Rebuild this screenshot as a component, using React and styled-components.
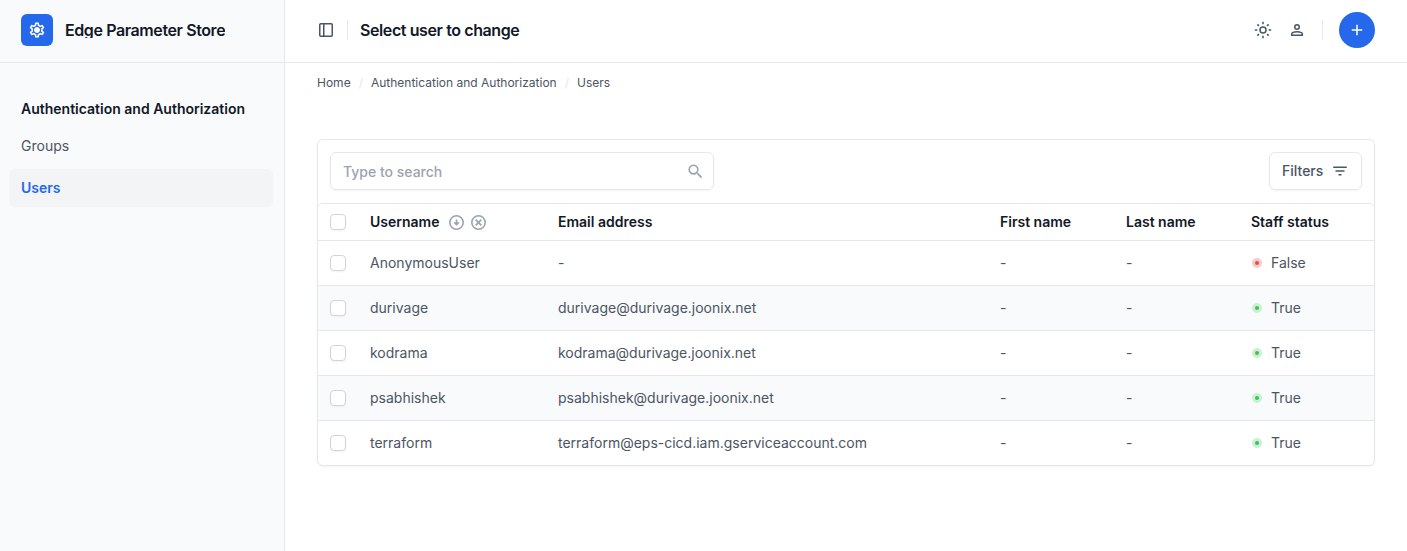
import React from "react";
import styled, { createGlobalStyle, css } from "styled-components";
import { MdOutlineSettings, MdAdd, MdSearch, MdFilterList } from "react-icons/md";

const GlobalStyle = createGlobalStyle`
  *, *::before, *::after { box-sizing: border-box; }
  body {
    margin: 0;
    background: #fff;
    color: #4b5563;
    font-family: Inter, "Liberation Sans", sans-serif;
    font-size: 14px;
    line-height: 20px;
    overflow: hidden;
  }
  svg { display: block; flex-shrink: 0; }
`;

const Page = styled.div`
  display: flex;
  height: 551px;
`;

const Sidebar = styled.aside`
  width: 285px;
  flex-shrink: 0;
  background: #f9fafb;
  border-right: 1px solid #e5e7eb;
`;

const Brand = styled.div`
  display: flex;
  align-items: center;
  gap: 12px;
  height: 63px;
  padding: 0 21px 2px;
  border-bottom: 1px solid #e5e7eb;
`;

const Logo = styled.div`
  display: grid;
  place-items: center;
  width: 32px;
  height: 32px;
  border-radius: 6px;
  background: #2568eb;
  color: #fff;
`;

const BrandName = styled.span`
  color: #111827;
  font-size: 16px;
  font-weight: 600;
  line-height: 16px;
  letter-spacing: -0.4px;
  overflow: hidden;
  white-space: nowrap;
`;

const Nav = styled.nav`
  padding: 36px 11px 0 9px;
`;

const NavTitle = styled.h2`
  margin: 0 0 8px;
  padding: 0 12px;
  color: #111827;
  font-size: 14px;
  font-weight: 600;
  line-height: 20px;
`;

const NavItem = styled.a`
  display: flex;
  align-items: center;
  height: 38px;
  margin-bottom: 4px;
  padding: 0 12px;
  border-radius: 6px;
  ${(p) => p.$active && css`
    background: #f3f4f6;
    color: #2568eb;
    font-weight: 600;
  `}
`;

const Main = styled.main`
  flex: 1;
  min-width: 0;
`;

const Header = styled.header`
  display: flex;
  align-items: center;
  height: 63px;
  padding: 0 32px 2px;
  border-bottom: 1px solid #e5e7eb;
`;

const Divider = styled.span`
  width: 1px;
  height: 20px;
  margin: ${(p) => p.$margin};
  background: #e5e7eb;
`;

const PageTitle = styled.h1`
  margin: 0;
  color: #111827;
  font-size: 16px;
  font-weight: 600;
  line-height: 24px;
  letter-spacing: -0.4px;
`;

const Actions = styled.div`
  display: flex;
  align-items: center;
  margin-left: auto;
`;

const IconGroup = styled.div`
  display: flex;
  gap: 16px;
`;

const AddButton = styled.button`
  display: grid;
  place-items: center;
  width: 36px;
  height: 36px;
  padding: 0;
  border: 0;
  border-radius: 50%;
  background: #2568eb;
  color: #fff;
`;

const Breadcrumbs = styled.div`
  display: flex;
  gap: 8px;
  padding: 12px 32px 0;
  font-size: 12px;
  line-height: 16px;
`;

const Slash = styled.span`
  color: #e5e7eb;
`;

const Card = styled.section`
  margin: 48px 32px 0;
  border: 1px solid #e5e7eb;
  border-radius: 6px;
  box-shadow: 0 1px 2px rgba(0, 0, 0, 0.05);
`;

const Toolbar = styled.div`
  display: flex;
  justify-content: space-between;
  padding: 12px 12px 13px;
`;

const Field = styled.div`
  display: flex;
  align-items: center;
  justify-content: space-between;
  width: ${(p) => p.$width}px;
  height: 38px;
  padding: 0 ${(p) => p.$right}px 0 12px;
  border: 1px solid #e5e7eb;
  border-radius: 6px;
  box-shadow: 0 1px 2px rgba(0, 0, 0, 0.05);
  color: ${(p) => (p.$muted ? "#9ca3af" : "#4b5563")};
  font-weight: 500;
`;

const Placeholder = styled.span`
  padding-top: 2px;
`;

const Table = styled.div`
  margin: 0 -1px -1px;
  border: 1px solid #e5e7eb;
  border-radius: 6px;
  overflow: hidden;
`;

const Row = styled.div`
  display: grid;
  grid-template-columns: 40px 188px 442px 126px 125px 1fr;
  align-items: center;
  height: 45px;
  border-top: 1px solid #e5e7eb;
  background: ${(p) => (p.$striped ? "#f9fafb" : "#fff")};
`;

const HeadRow = styled(Row)`
  height: 36px;
  border-top: 0;
  color: #111827;
  font-weight: 600;
`;

const Cell = styled.div`
  display: flex;
  align-items: center;
  padding: 0 12px;
  white-space: nowrap;
`;

const Checkbox = styled.span`
  width: 16px;
  height: 16px;
  border: 1px solid #d1d5db;
  border-radius: 4px;
  background: #fff;
  box-shadow: 0 1px 2px rgba(0, 0, 0, 0.05);
`;

const SortIcons = styled.span`
  display: flex;
  gap: 7px;
  margin-left: 10px;
  color: #9ca3af;
`;

const Dot = styled.span`
  display: grid;
  place-items: center;
  width: 10px;
  height: 10px;
  margin: 0 9px 0 1px;
  border-radius: 50%;
  background: ${(p) => (p.$on ? "#c6f3d1" : "#f9caca")};
  &::after {
    content: "";
    width: 4px;
    height: 4px;
    border-radius: 50%;
    background: ${(p) => (p.$on ? "#4fb85f" : "#dc5148")};
  }
`;

const GearIcon = () => (
  <svg width="18" height="18" viewBox="0 0 18 18" fill="currentColor">
    <MdOutlineSettings size={18} />
    <circle cx="9" cy="9" r="2.2" />
  </svg>
);

const PanelIcon = () => (
  <svg width="18" height="18" viewBox="0 0 18 18" fill="none" stroke="#4b5563" strokeWidth="1.5">
    <rect x="2.75" y="2.75" width="12.5" height="12.5" rx="1" />
    <path d="M6.75 3v12" />
  </svg>
);

const SunIcon = () => (
  <svg width="18" height="18" viewBox="0 0 18 18" fill="none" stroke="#4b5563" strokeWidth="1.5">
    <circle cx="9" cy="9" r="3" />
    <path d="M9 .8v2.5M9 14.7v2.5M.8 9h2.5M14.7 9h2.5M3.4 3.4l1.5 1.5M13.1 13.1l1.5 1.5M3.4 14.6l1.5-1.5M13.1 4.9l1.5-1.5" />
  </svg>
);

const PersonIcon = () => (
  <svg width="18" height="18" viewBox="0 0 18 18" fill="none" stroke="#4b5563" strokeWidth="1.5">
    <circle cx="9" cy="6" r="2.25" />
    <path d="M3.75 14.25v-1.3c0-.6.3-1 .9-1.3C6 11 7.500 10.750 9 10.750s3 .25 4.350.9c.6.3.9.7.9 1.300v1.300z" />
  </svg>
);

const SortDownIcon = () => (
  <svg width="15" height="15" viewBox="0 0 15 15" fill="none" stroke="currentColor" strokeWidth="1.6">
    <circle cx="7.5" cy="7.5" r="6.7" />
    <path d="M7.5 4.5v5M5.200 7.400l2.300 2.300 2.300-2.300" />
  </svg>
);

const ClearSortIcon = () => (
  <svg width="15" height="15" viewBox="0 0 15 15" fill="none" stroke="currentColor" strokeWidth="1.6">
    <circle cx="7.5" cy="7.5" r="6.7" />
    <path d="M4.600 4.600l5.800 5.800M10.400 4.600l-5.800 5.800" />
  </svg>
);

const users = [
  { name: "AnonymousUser", email: "-", staff: false },
  { name: "durivage", email: "durivage@durivage.joonix.net", staff: true },
  { name: "kodrama", email: "kodrama@durivage.joonix.net", staff: true },
  { name: "psabhishek", email: "psabhishek@durivage.joonix.net", staff: true },
  { name: "terraform", email: "terraform@eps-cicd.iam.gserviceaccount.com", staff: true },
];

export default function App() {
  return (
    <Page>
      <GlobalStyle />
      <Sidebar>
        <Brand>
          <Logo><GearIcon /></Logo>
          <BrandName>Edge Parameter Store</BrandName>
        </Brand>
        <Nav>
          <NavTitle>Authentication and Authorization</NavTitle>
          <NavItem>Groups</NavItem>
          <NavItem $active>Users</NavItem>
        </Nav>
      </Sidebar>
      <Main>
        <Header>
          <PanelIcon />
          <Divider $margin="0 12px" />
          <PageTitle>Select user to change</PageTitle>
          <Actions>
            <IconGroup>
              <SunIcon />
              <PersonIcon />
            </IconGroup>
            <Divider $margin="0 16px" />
            <AddButton><MdAdd size={18} /></AddButton>
          </Actions>
        </Header>
        <Breadcrumbs>
          <span>Home</span>
          <Slash>/</Slash>
          <span>Authentication and Authorization</span>
          <Slash>/</Slash>
          <span>Users</span>
        </Breadcrumbs>
        <Card>
          <Toolbar>
            <Field $width={384} $right={8} $muted>
              <Placeholder>Type to search</Placeholder>
              <MdSearch size={19} />
            </Field>
            <Field $width={93} $right={12}>
              Filters
              <MdFilterList size={18} />
            </Field>
          </Toolbar>
          <Table>
            <HeadRow>
              <Cell><Checkbox /></Cell>
              <Cell>
                Username
                <SortIcons>
                  <SortDownIcon />
                  <ClearSortIcon />
                </SortIcons>
              </Cell>
              <Cell>Email address</Cell>
              <Cell>First name</Cell>
              <Cell>Last name</Cell>
              <Cell>Staff status</Cell>
            </HeadRow>
            {users.map((user, i) => (
              <Row key={user.name} $striped={i % 2 === 1}>
                <Cell><Checkbox /></Cell>
                <Cell>{user.name}</Cell>
                <Cell>{user.email}</Cell>
                <Cell>-</Cell>
                <Cell>-</Cell>
                <Cell>
                  <Dot $on={user.staff} />
                  {user.staff ? "True" : "False"}
                </Cell>
              </Row>
            ))}
          </Table>
        </Card>
      </Main>
    </Page>
  );
}
